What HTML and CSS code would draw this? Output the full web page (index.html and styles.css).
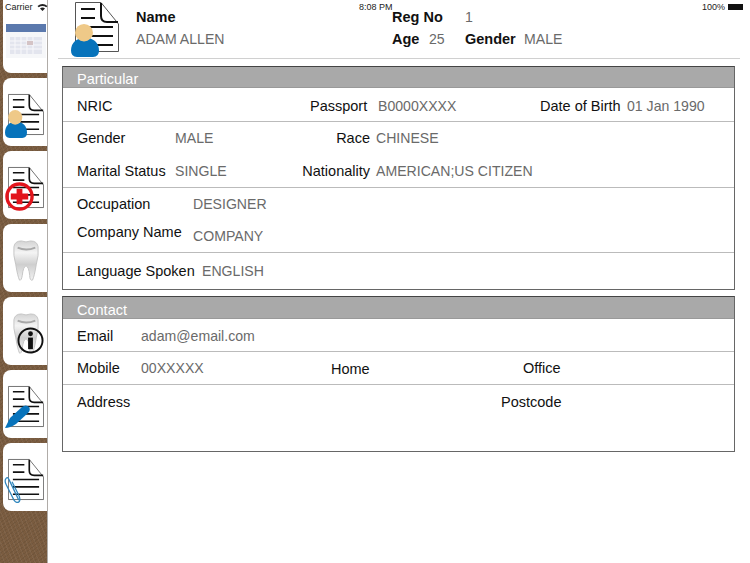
FILE: index.html
```html
<!DOCTYPE html>
<html lang="en">
<head>
  <meta charset="UTF-8" />
  <title>Patient Particular</title>
  <link rel="stylesheet" href="styles.css">
</head>
<body>
<svg class="defs" width="0" height="0">
  <defs>
    <linearGradient id="toothFill" x1="0" y1="0" x2="0" y2="1">
      <stop offset="0" stop-color="#d4d4d4"/>
      <stop offset=".3" stop-color="#f4f4f4"/>
      <stop offset=".6" stop-color="#cfcfcf"/>
      <stop offset="1" stop-color="#f2f2f2"/>
    </linearGradient>
  </defs>
  <symbol id="doc" viewBox="0 0 44 50">
    <path d="M.5 .5H26L43.5 22V49.5H.5Z" fill="#fff" stroke="#555"/>
    <path d="M26 1V14Q26 20 32 20H43" fill="none" stroke="#111" stroke-width="2"/>
    <path d="M6 7H20M6 16H20M6 25H38M6 34H38M6 43H38" stroke="#111" stroke-width="2"/>
  </symbol>
  <symbol id="person" viewBox="0 0 28 36" preserveAspectRatio="none">
    <path d="M0 29C0 20 6 15 14 15S28 20 28 29Q28 36 22 36H6Q0 36 0 29Z" fill="#0773bb"/>
    <ellipse cx="13" cy="9.500" rx="9" ry="9.500" fill="#efc988"/>
  </symbol>
  <symbol id="tooth" viewBox="0 0 28 44" preserveAspectRatio="none">
    <path d="M1 7Q2 1 9 1Q14 3 19 1Q26 1 27 7Q28 16 25 26Q23 38 21 42Q18 43 18 37Q17 28 14 27Q11 28 10 37Q9 43 7 42Q5 38 3 26Q0 16 1 7Z" fill="url(#toothFill)" stroke="#c4c4c4"/>
    <path d="M5 8Q14 12 24 8" fill="none" stroke="#a8a8a8" stroke-width="2"/>
  </symbol>
</svg>

<div class="status-bar">
  <span class="carrier">Carrier
    <svg class="wifi" width="11" height="8" viewBox="0 0 11 8"><path d="M.5 3Q5.500-1 10.500 3L9.300 4.300Q5.500 1.500 1.700 4.300ZM3 5.500Q5.500 3.500 8 5.500L5.500 8Z" fill="#222"/></svg>
  </span>
  <span class="clock">8:08 PM</span>
  <span class="battery-wrap">100% <i class="battery"></i></span>
</div>

<div class="app">
  <nav class="sidebar">
    <div class="tab tab-first">
      <svg class="cal" width="40" height="34" viewBox="0 0 40 34">
        <rect x="0" y="0" width="40" height="34" fill="#f6f7f9"/>
        <rect x="0" y="0" width="40" height="8" fill="#5b79ad"/>
        <rect x="4" y="13" width="32" height="17" fill="#e3e5ee"/>
        <path d="M9 13V30M15 13V30M21 13V30M27 13V30M4 17H36M4 21H36M4 25H36" stroke="#f8f8fb" stroke-width="1"/>
        <rect x="21" y="17" width="6" height="4" fill="#d5c4c6"/>
      </svg>
    </div>
    <div class="tab">
      <div class="tab-icon">
        <svg class="doc-small"><use href="#doc"/></svg>
        <svg class="badge-person"><use href="#person"/></svg>
      </div>
    </div>
    <div class="tab">
      <div class="tab-icon">
        <svg class="doc-small"><use href="#doc"/></svg>
        <svg class="badge-plus" viewBox="0 0 30 30">
          <circle cx="15" cy="15" r="13" fill="none" stroke="#e2141c" stroke-width="3.500"/>
          <path d="M15 7V23M6 15H24" stroke="#e2141c" stroke-width="6"/>
        </svg>
      </div>
    </div>
    <div class="tab">
      <div class="tab-icon">
        <svg class="tooth"><use href="#tooth"/></svg>
      </div>
    </div>
    <div class="tab">
      <div class="tab-icon">
        <svg class="tooth"><use href="#tooth"/></svg>
        <svg class="badge-info" viewBox="0 0 28 28">
          <circle cx="14" cy="14" r="12.500" fill="none" stroke="#111" stroke-width="2"/>
          <circle cx="14" cy="7" r="2.500" fill="#111"/>
          <path d="M14 11V23" stroke="#111" stroke-width="5"/>
        </svg>
      </div>
    </div>
    <div class="tab">
      <div class="tab-icon">
        <svg class="doc-small"><use href="#doc"/></svg>
        <svg class="badge-pen" viewBox="0 0 26 25">
          <path d="M0 24L5 14L17 3Q21 0 24 3Q26 6 23 9L11 20Q5 24 0 24Z" fill="#0773bb"/>
        </svg>
      </div>
    </div>
    <div class="tab">
      <div class="tab-icon">
        <svg class="doc-small"><use href="#doc"/></svg>
        <svg class="badge-clip" viewBox="0 0 18 28">
          <path d="M15 25L5 4Q3 0 1.500 3Q0 5 2 9L10 25Q13 29 15.500 26.500Q17 24 15 20L8 6" fill="none" stroke="#2f86bd" stroke-width="1.300"/>
        </svg>
      </div>
    </div>
  </nav>

  <main class="content">
    <header class="summary">
      <div class="summary-icon">
        <svg class="doc-large"><use href="#doc"/></svg>
        <svg class="person-large"><use href="#person"/></svg>
      </div>
      <div class="summary-name">
        <strong>Name</strong>
        <span class="val">ADAM ALLEN</span>
      </div>
      <div class="summary-info">
        <div class="summary-line">
          <strong class="w-reg">Reg No</strong><span class="val">1</span>
        </div>
        <div class="summary-line">
          <strong class="w-age">Age</strong><span class="val w-age-val">25</span>
          <strong class="w-gender">Gender</strong><span class="val">MALE</span>
        </div>
      </div>
    </header>

    <section class="panel">
      <h2 class="panel-title">Particular</h2>
      <div class="group group-nric">
        <div class="row">
          <span class="w-left">NRIC</span>
          <span class="w-mid">Passport</span><span class="val w-pass">B0000XXXX</span>
          <span class="w-dob">Date of Birth</span><span class="val">01 Jan 1990</span>
        </div>
      </div>
      <div class="group group-gender">
        <div class="row row-up">
          <span class="w-label">Gender</span><span class="val w-short">MALE</span>
          <span class="w-right">Race</span><span class="val">CHINESE</span>
        </div>
        <div class="row">
          <span class="w-label">Marital Status</span><span class="val w-short">SINGLE</span>
          <span class="w-right">Nationality</span><span class="val">AMERICAN;US CITIZEN</span>
        </div>
      </div>
      <div class="group group-work">
        <div class="row row-up">
          <span class="w-work">Occupation</span><span class="val">DESIGNER</span>
        </div>
        <div class="row row-company">
          <span class="w-work">Company Name</span><span class="val val-low">COMPANY</span>
        </div>
      </div>
      <div class="group group-lang">
        <div class="row row-up">
          <span class="w-lang">Language Spoken</span><span class="val">ENGLISH</span>
        </div>
      </div>
    </section>

    <section class="panel panel-contact">
      <h2 class="panel-title">Contact</h2>
      <div class="group group-email">
        <div class="row">
          <span class="w-contact">Email</span><span class="val">adam@email.com</span>
        </div>
      </div>
      <div class="group group-mobile">
        <div class="row row-up">
          <span class="w-contact">Mobile</span><span class="val w-phone">00XXXXX</span>
          <span class="w-home">Home</span><span>Office</span>
        </div>
      </div>
      <div class="group group-address">
        <div class="row">
          <span class="w-address">Address</span><span>Postcode</span>
        </div>
      </div>
    </section>
  </main>
</div>
</body>
</html>
```

FILE: styles.css
```css
* { margin: 0; padding: 0; box-sizing: border-box; }
html, body {
  width: 750px; height: 563px; overflow: hidden;
  background: #fff; color: #111;
  font-family: "Liberation Sans", Arial, sans-serif; font-size: 14.5px;
}
.defs { position: absolute; }

/* status bar lies over the app */
.status-bar {
  position: absolute; top: 0; left: 0; width: 746px; height: 14px; z-index: 10;
  display: flex; align-items: center;
  padding: 0 3px 0 5px; font-size: 9px; color: #222;
}
.carrier { width: 354px; flex: none; }
.clock { flex: 1; }
.wifi { margin-left: 2px; vertical-align: -1px; }
.battery-wrap { display: flex; align-items: center; gap: 3px; }
.battery { display: block; width: 15px; height: 6px; background: #111; }

.app { display: flex; height: 563px; }

/* wood strip behind the tabs */
.sidebar {
  width: 48px; height: 563px; flex: none;
  background-color: #7a5c40;
  background-image:
    repeating-linear-gradient(67deg, rgba(255,255,255,.05) 0 1px, transparent 1px 4px),
    repeating-linear-gradient(-38deg, rgba(0,0,0,.07) 0 1px, transparent 1px 3px);
  border-right: 1px solid #b0aca8;
  display: flex; flex-direction: column; gap: 5px; padding-left: 3px;
}
.tab {
  width: 44px; height: 68px; flex: none;
  background: #fff; border-radius: 8px 0 0 8px;
  display: flex; align-items: center;
}
.tab-first {
  height: 73px; border-radius: 0 0 0 8px;
  align-items: flex-start; padding: 24px 0 0 3px;
}
.tab-icon { position: relative; width: 44px; height: 56px; }
.doc-small { display: block; width: 36px; height: 43px; margin: 9px 0 0 5px; }
.tooth { display: block; width: 26px; height: 42px; margin: 10px 0 0 10px; }
.badge-person { position: absolute; left: 2px; top: 26px; width: 22px; height: 28px; }
.badge-plus { position: absolute; left: 2px; top: 25px; width: 29px; height: 29px; }
.badge-info { position: absolute; left: 14px; top: 24px; width: 27px; height: 27px; }
.badge-pen { position: absolute; left: 2px; top: 28px; width: 26px; height: 25px; }
.badge-clip { position: absolute; left: 1px; top: 27px; width: 18px; height: 27px; }

.content { flex: 1; padding: 0 15px 0 10px; }

.summary {
  height: 59px; margin-right: -5px; border-bottom: 1px solid #d0d0d0;
  display: flex; align-items: flex-start;
}
.summary-icon { position: relative; width: 78px; height: 58px; flex: none; }
.doc-large { position: absolute; left: 17px; top: 2px; width: 44px; height: 50px; }
.person-large { position: absolute; left: 13px; top: 24px; width: 28px; height: 33px; }
.summary-name {
  width: 256px; padding-top: 9px;
  display: flex; flex-direction: column; gap: 6px; line-height: 16px;
}
.summary-line { display: flex; line-height: 16px; height: 22px; }
.summary-info { padding-top: 9px; }
.w-reg { width: 73px; }
.w-age { width: 37px; }
.w-age-val { width: 36px; }
.w-gender { width: 59px; }

.val { color: #6a6a6a; font-size: 14.1px; }

.panel { margin: 7px 0 0 4px; border: 1px solid #666; border-top-color: #444; }
.panel-contact { margin-top: 6px; }
.panel-title {
  background: #a9a9a9; color: #fff; height: 21px;
  font-size: 14.5px; font-weight: normal; line-height: 24px;
  padding-left: 14px; border-bottom: 1px solid #999;
}
.panel-contact .panel-title { height: 22px; line-height: 26px; }
.group { border-top: 1px solid #bbb; padding-left: 14px; }
.panel-title + .group { border-top: 0; }
.row { display: flex; align-items: center; height: 33px; }
.row-up { margin-top: -1px; }

.group-nric { height: 33px; padding-top: 1px; }
.group-gender { height: 66px; }
.group-work { height: 65px; }
.group-lang { height: 37px; padding-top: 2px; }
.row-company { height: 24px; }
.val-low { position: relative; top: 4px; }

.w-left { width: 233px; }
.w-mid { width: 68px; }
.w-pass { width: 162px; }
.w-dob { width: 87px; }
.w-label { width: 98px; }
.w-short { width: 127px; flex: none; }
.w-right { width: 74px; padding-right: 6px; text-align: right; flex: none; white-space: nowrap; }
.w-work { width: 116px; }
.w-lang { width: 125px; }
.w-contact { width: 64px; }
.w-phone { width: 190px; }
.w-home { width: 192px; padding-top: 2px; }
.w-address { width: 424px; }
.group-address { height: 67px; }
.group-email { height: 32px; }
.group-mobile { height: 33px; }
```
